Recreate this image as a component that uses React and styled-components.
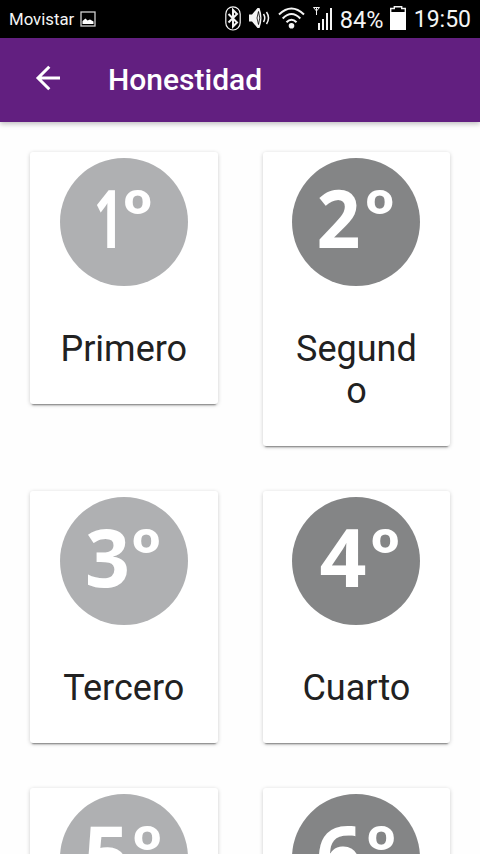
import styled, { createGlobalStyle } from "styled-components";

const grades = [
  { digit: "1", label: "Primero", x: 34, ringX: 63, width: 29 },
  { digit: "2", label: "Segundo", x: 24.5, ringX: 73, width: 44, dark: true },
  { digit: "3", label: "Tercero", x: 25, ringX: 71.5, width: 45 },
  { digit: "4", label: "Cuarto", x: 27.5, ringX: 78.5, width: 47, dark: true },
  { digit: "5", label: "Quinto", x: 23.5, ringX: 72.5, width: 46 },
  { digit: "6", label: "Sexto", x: 24, ringX: 74.5, width: 46, dark: true },
];

const StatusBar = () => (
  <Status>
    <Carrier>Movistar</Carrier>
    <svg width="16" height="16" viewBox="0 0 16 16">
      <rect x="1" y="1" width="14" height="14" fill="none" stroke="#d0d0d0" strokeWidth="1.3" />
      <path d="M2.5 13V10l3-2.5 2 2 2.5-1 3.5 2V13z" fill="#fff" />
    </svg>
    <Tray>
      <svg width="16" height="25" viewBox="0 0 16 25" fill="none" stroke="#f4f4f4">
        <rect x=".8" y=".8" width="14.4" height="23.2" rx="7.2" strokeWidth="1.2" />
        <path d="M3.5 8l8.5 8.5-4 4V4l4 4-8.5 8.5" strokeWidth="2" />
      </svg>
      <svg width="21" height="22" viewBox="0 0 21 22">
        <path d="M0 7.5h3L8.5 1h2q4 10 0 20h-2L3 14.5H0z" fill="#f4f4f4" />
        <path d="M9.5 4.5q-3 6.5 0 13q2.6-6.5 0-13" fill="none" stroke="#000" strokeWidth=".8" />
        <path d="M14.5 7q2.5 4 0 8M17.5 5q4 6 0 12" fill="none" stroke="#f4f4f4" strokeWidth="1.5" />
      </svg>
      <svg width="27" height="22" viewBox="0 0 27 22" fill="none" stroke="#f4f4f4" strokeWidth="2">
        <path d="M1 7.5Q13.5-4.5 26 7.5M4.7 11.5Q13.5 2.5 22.3 11.5M8.5 15.3Q13.5 10 18.5 15.3" />
        <circle cx="13.5" cy="18.7" r="2.8" fill="#f4f4f4" stroke="none" />
      </svg>
      <svg width="20" height="24" viewBox="0 0 20 24" fill="#f4f4f4">
        <path d="M.5 1.5h6L3.5 5zM3.5 1v8" fill="none" stroke="#f4f4f4" />
        <path d="M5 17h2v7H5zM9 13h2v11H9zM13 7h2v17h-2zM17 2h2v22h-2z" />
      </svg>
      <Battery>84%</Battery>
      <svg width="16" height="24" viewBox="0 0 16 24">
        <path d="M.7 7V2.5h3.6V.8h7.4v1.7h3.6V7" fill="none" stroke="#f4f4f4" strokeWidth="1.4" />
        <path d="M0 6h16v18H0z" fill="#fff" />
      </svg>
      <Clock>19:50</Clock>
    </Tray>
  </Status>
);

const Badge = ({ digit, x, ringX, width, dark }) => (
  <BadgeDrawing viewBox="0 0 128 128">
    <circle cx="64" cy="64" r="64" fill={dark ? "#848586" : "#afb0b2"} />
    <Numeral x={x} y="89.5" textLength={width} lengthAdjust="spacingAndGlyphs">
      {digit}
    </Numeral>
    <Ordinal x={ringX} y="80.5" textLength="29.5" lengthAdjust="spacingAndGlyphs">
      º
    </Ordinal>
  </BadgeDrawing>
);

const App = () => {
  return (
    <Screen>
      <GlobalStyle />
      <StatusBar />
      <Toolbar>
        <BackButton aria-label="Volver">
          <svg width="26" height="26" viewBox="0 0 26 26" fill="none" stroke="#fff" strokeWidth="3">
            <path d="M25 13H3.500M14.300 1.700L3 13l11.300 11.300" />
          </svg>
        </BackButton>
        <Title>Honestidad</Title>
      </Toolbar>
      <Grid>
        {grades.map((grade) => (
          <Card key={grade.digit}>
            <Badge {...grade} />
            <Label>{grade.label}</Label>
          </Card>
        ))}
      </Grid>
    </Screen>
  );
};

//Styled-Components

const GlobalStyle = createGlobalStyle`
  * {
    box-sizing: border-box;
  }

  body {
    margin: 0;
    overflow: hidden;
    background: #fefefe;
    font-family: Roboto, sans-serif;
  }
`;

const Screen = styled.div`
  display: flex;
  flex-direction: column;
  height: 854px;
  overflow: hidden;
`;

const Status = styled.div`
  display: flex;
  align-items: center;
  flex: 0 0 38px;
  height: 38px;
  padding: 0 9px;
  color: #f4f4f4;
  background: #000;
`;

const Carrier = styled.span`
  width: 71px;
  font-size: 16.8px;
`;

const Tray = styled.div`
  display: flex;
  align-items: center;
  margin-left: auto;

  svg {
    flex: none;
    margin: 0 8px 2px 0;
  }
`;

const Battery = styled.span`
  width: 50px;
  margin-left: -1px;
  padding-top: 2px;
  font-size: 23.5px;
  line-height: 36px;
`;

const Clock = styled.span`
  padding-top: 2px;
  font-size: 23px;
  line-height: 36px;
`;

const Toolbar = styled.header`
  display: flex;
  align-items: center;
  flex: 0 0 84px;
  padding: 0 0 2px 35px;
  color: #fff;
  background: #621f80;
  box-shadow: 0 2px 5px rgba(0, 0, 0, 0.25);
`;

const BackButton = styled.button`
  display: flex;
  width: 73px;
  padding: 0 0 3px;
  background: none;
  border: none;
`;

const Title = styled.h1`
  margin: 0;
  font-size: 30px;
  font-weight: 500;
`;

const Grid = styled.main`
  display: grid;
  grid-template-columns: 187.6px 187.6px;
  align-items: start;
  gap: 45px;
  padding: 29.5px 30px;
`;

const Card = styled.div`
  display: flex;
  flex-direction: column;
  align-items: center;
  padding: 6.5px 29px 34px;
  background: #fff;
  border-radius: 3px;
  box-shadow: 0 3px 2px -2px rgba(0, 0, 0, 0.45), 0 1px 4px rgba(0, 0, 0, 0.2);
`;

const BadgeDrawing = styled.svg`
  width: 128px;
  height: 128px;
`;

const Numeral = styled.text`
  fill: #fff;
  font-family: "Noto Sans", sans-serif;
  font-size: 80px;
  font-weight: 700;
`;

const Ordinal = styled(Numeral)`
  font-family: "Open Sans", sans-serif;
  font-size: 67px;
`;

const Label = styled.div`
  width: 100%;
  margin-top: 41.5px;
  color: #212121;
  font-size: 36px;
  line-height: 42px;
  text-align: center;
  word-break: break-word;
`;

export default App;
